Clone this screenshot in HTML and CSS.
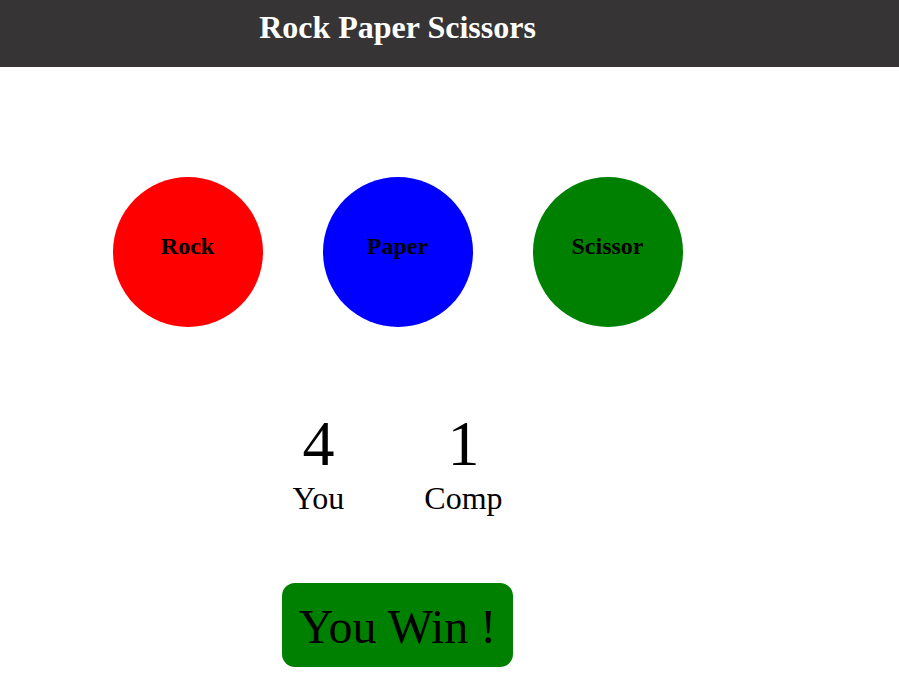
FILE: index.html
```html
<!DOCTYPE html>
<html>
<head>
<meta charset="utf-8">
<title>Rock Paper Scissors</title>
<link rel="stylesheet" href="styles.css">
</head>
<body>
<header class="header">
  <h1 class="title">Rock Paper Scissors</h1>
</header>
<main class="page">
  <div class="choices">
    <div class="choice rock">Rock</div>
    <div class="choice paper">Paper</div>
    <div class="choice scissor">Scissor</div>
  </div>
  <div class="scores">
    <div class="score">
      <div class="num">4</div>
      <div class="label">You</div>
    </div>
    <div class="score">
      <div class="num">1</div>
      <div class="label">Comp</div>
    </div>
  </div>
  <div class="result-row">
    <div class="result">You Win !</div>
  </div>
</main>
</body>
</html>
```
FILE: styles.css
```css
* { box-sizing: border-box; }
html, body {
  margin: 0;
  padding: 0;
  background: #ffffff;
  font-family: "Liberation Serif", "Times New Roman", serif;
  color: #000;
}
.header {
  background: #363435;
  height: 67px;
  padding-top: 9px;
}
.title {
  margin: 0;
  width: 795px;
  text-align: center;
  color: #ffffff;
  font-size: 32px;
  font-weight: bold;
  line-height: normal;
}
.page {
  width: 795px;
  display: flex;
  flex-direction: column;
  align-items: center;
}
.choices {
  display: flex;
  gap: 60px;
  margin-top: 110px;
}
.choice {
  width: 150px;
  height: 150px;
  border-radius: 50%;
  display: flex;
  align-items: center;
  justify-content: center;
  padding-bottom: 12px;
  font-size: 24px;
  font-weight: bold;
}
.rock { background: #ff0000; }
.paper { background: #0000ff; }
.scissor { background: #008000; }
.scores {
  display: flex;
  gap: 80px;
  margin-top: 80px;
}
.score {
  display: flex;
  flex-direction: column;
  align-items: center;
}
.num {
  font-size: 64px;
  line-height: normal;
}
.label {
  font-size: 32px;
  line-height: normal;
  margin-top: -1px;
}
.result-row {
  margin-top: 66px;
  display: flex;
  justify-content: center;
}
.result {
  background: #008000;
  border-radius: 13px;
  font-size: 48px;
  line-height: normal;
  padding: 16px 17px 13px;
  height: 84px;
}
```
